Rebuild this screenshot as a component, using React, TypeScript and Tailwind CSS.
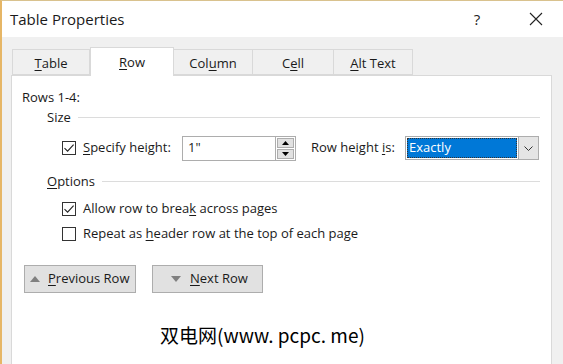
import React from "react";

const font = { fontFamily: '"Open Sans", "Noto Sans", sans-serif' };

function U({ children }: { children: React.ReactNode }) {
  return <span className="underline underline-offset-2 decoration-1">{children}</span>;
}

function Check({ checked }: { checked: boolean }) {
  return (
    <div className="w-[14px] h-[14px] border border-[#333333] bg-white flex items-center justify-center shrink-0">
      {checked && (
        <svg width="12" height="12" viewBox="0 0 12 12">
          <path d="M1.5 6.2 L4.6 9.2 L10.6 2.6" fill="none" stroke="#222" strokeWidth="1.1" />
        </svg>
      )}
    </div>
  );
}

function Tab({ label, w, active }: { label: React.ReactNode; w: string; active?: boolean }) {
  return (
    <div
      className={
        active
          ? `${w} h-[29px] bg-white border border-[#d9d9d9] border-b-0 -mb-px relative z-10 flex items-center justify-center pt-[1px] text-[13px] text-[#1a1a1a]`
          : `${w} h-[26px] bg-[#f0f0f0] border border-[#d9d9d9] border-l-0 first:border-l flex items-center justify-center pt-[3px] text-[13px] text-[#1a1a1a]`
      }
    >
      {label}
    </div>
  );
}

function GroupHeader({ children }: { children: React.ReactNode }) {
  return (
    <div className="flex items-center h-[16px] pl-[35px] pr-[11px]">
      <span className="text-[13px] text-[#1a1a1a] leading-none">{children}</span>
      <div className="flex-1 ml-[7px] h-px bg-[#dcdcdc]" />
    </div>
  );
}

export default function App() {
  return (
    <div
      className="w-[563px] h-[364px] bg-[#f0f0f0] border-l-2 border-t border-l-[#e6b666] border-t-[#d9c28e] flex flex-col overflow-hidden"
      style={font}
    >
      {/* title bar */}
      <div className="h-[36px] bg-white flex items-center shrink-0">
        <div className="pl-[8px] pt-[1px] text-[15px] text-[#1a1a1a] flex-1">Table Properties</div>
        <div className="w-[20px] text-center text-[15px] text-[#222] mr-[42px]">?</div>
        <div className="mr-[20px]">
          <svg width="14" height="14" viewBox="0 0 14 14">
            <path d="M1 1 L13 13 M13 1 L1 13" stroke="#222" strokeWidth="1.1" />
          </svg>
        </div>
      </div>

      {/* tabs */}
      <div className="flex items-end pl-[10px] mt-[10px] shrink-0">
        <Tab w="w-[78px]" label={<span><U>T</U>able</span>} />
        <Tab w="w-[84px]" active label={<span><U>R</U>ow</span>} />
        <Tab w="w-[79px]" label={<span>Col<U>u</U>mn</span>} />
        <Tab w="w-[81px]" label={<span>C<U>e</U>ll</span>} />
        <Tab w="w-[79px]" label={<span><U>A</U>lt Text</span>} />
      </div>

      {/* panel */}
      <div className="ml-[9px] w-[541px] flex-1 bg-white border border-[#d9d9d9] border-b-0 flex flex-col pt-[13px] text-[13px] text-[#1a1a1a]">
        <div className="h-[16px] pl-[10px] leading-[16px]">Rows 1-4:</div>

        <div className="mt-[4px]">
          <GroupHeader>Size</GroupHeader>
        </div>

        <div className="mt-[10px] h-[26px] flex items-center">
          <div className="ml-[50px]">
            <Check checked />
          </div>
          <div className="ml-[7px] w-[99px]">
            <U>S</U>pecify height:
          </div>
          <div className="w-[114px] h-[25px] border border-[#adadad] flex items-stretch">
            <div className="flex-1 pl-[5px] flex items-center">1"</div>
            <div className="w-[20px] flex flex-col border-l border-[#adadad] p-px gap-px bg-white">
              <div className="flex-1 bg-[#e1e1e1] border border-[#adadad] flex items-center justify-center">
                <svg width="7" height="4" viewBox="0 0 7 4"><path d="M0 4 L3.5 0 L7 4 Z" fill="#000" /></svg>
              </div>
              <div className="flex-1 bg-[#e1e1e1] border border-[#adadad] flex items-center justify-center">
                <svg width="7" height="4" viewBox="0 0 7 4"><path d="M0 0 L3.5 4 L7 0 Z" fill="#000" /></svg>
              </div>
            </div>
          </div>
          <div className="ml-[15px] w-[94px]">
            Row height <U>i</U>s:
          </div>
          <div className="w-[134px] h-[24px] border border-[#adadad] flex items-stretch bg-white">
            <div className="flex-1 m-px bg-[#0078d7] outline-1 outline-dotted outline-[#333] -outline-offset-1 text-white pl-[2px] flex items-center">
              Exactly
            </div>
            <div className="w-[20px] bg-[#e5e5e5] border-l border-[#adadad] flex items-center justify-center">
              <svg width="9" height="5" viewBox="0 0 9 5"><path d="M0.5 0.5 L4.5 4.5 L8.5 0.5" fill="none" stroke="#333" strokeWidth="1" /></svg>
            </div>
          </div>
        </div>

        <div className="mt-[12px]">
          <GroupHeader><U>O</U>ptions</GroupHeader>
        </div>

        <div className="mt-[12px] h-[16px] flex items-center">
          <div className="ml-[50px]"><Check checked /></div>
          <div className="ml-[7px]">Allow row to brea<U>k</U> across pages</div>
        </div>

        <div className="mt-[9px] h-[16px] flex items-center">
          <div className="ml-[50px]"><Check checked={false} /></div>
          <div className="ml-[7px]">Repeat as <U>h</U>eader row at the top of each page</div>
        </div>

        <div className="mt-[23px] flex gap-[16px] pl-[12px]">
          <div className="w-[112px] h-[28px] bg-[#e1e1e1] border border-[#adadad] flex items-center pl-[5px]">
            <svg width="10" height="6" viewBox="0 0 10 6"><path d="M0 6 L5 0 L10 6 Z" fill="#808080" /></svg>
            <span className="ml-[8px]"><U>P</U>revious Row</span>
          </div>
          <div className="w-[111px] h-[28px] bg-[#e1e1e1] border border-[#adadad] flex items-center pl-[18px]">
            <svg width="10" height="6" viewBox="0 0 10 6"><path d="M0 0 L5 6 L10 0 Z" fill="#808080" /></svg>
            <span className="ml-[9px]"><U>N</U>ext Row</span>
          </div>
        </div>

        <div
          className="mt-[29px] h-[26px] flex items-center pl-[148px] text-[19px] text-black"
          style={{ fontFamily: '"Noto Sans CJK SC", "DejaVu Sans", sans-serif' }}
        >
          双电网(www. pcpc. me)
        </div>
      </div>
    </div>
  );
}
